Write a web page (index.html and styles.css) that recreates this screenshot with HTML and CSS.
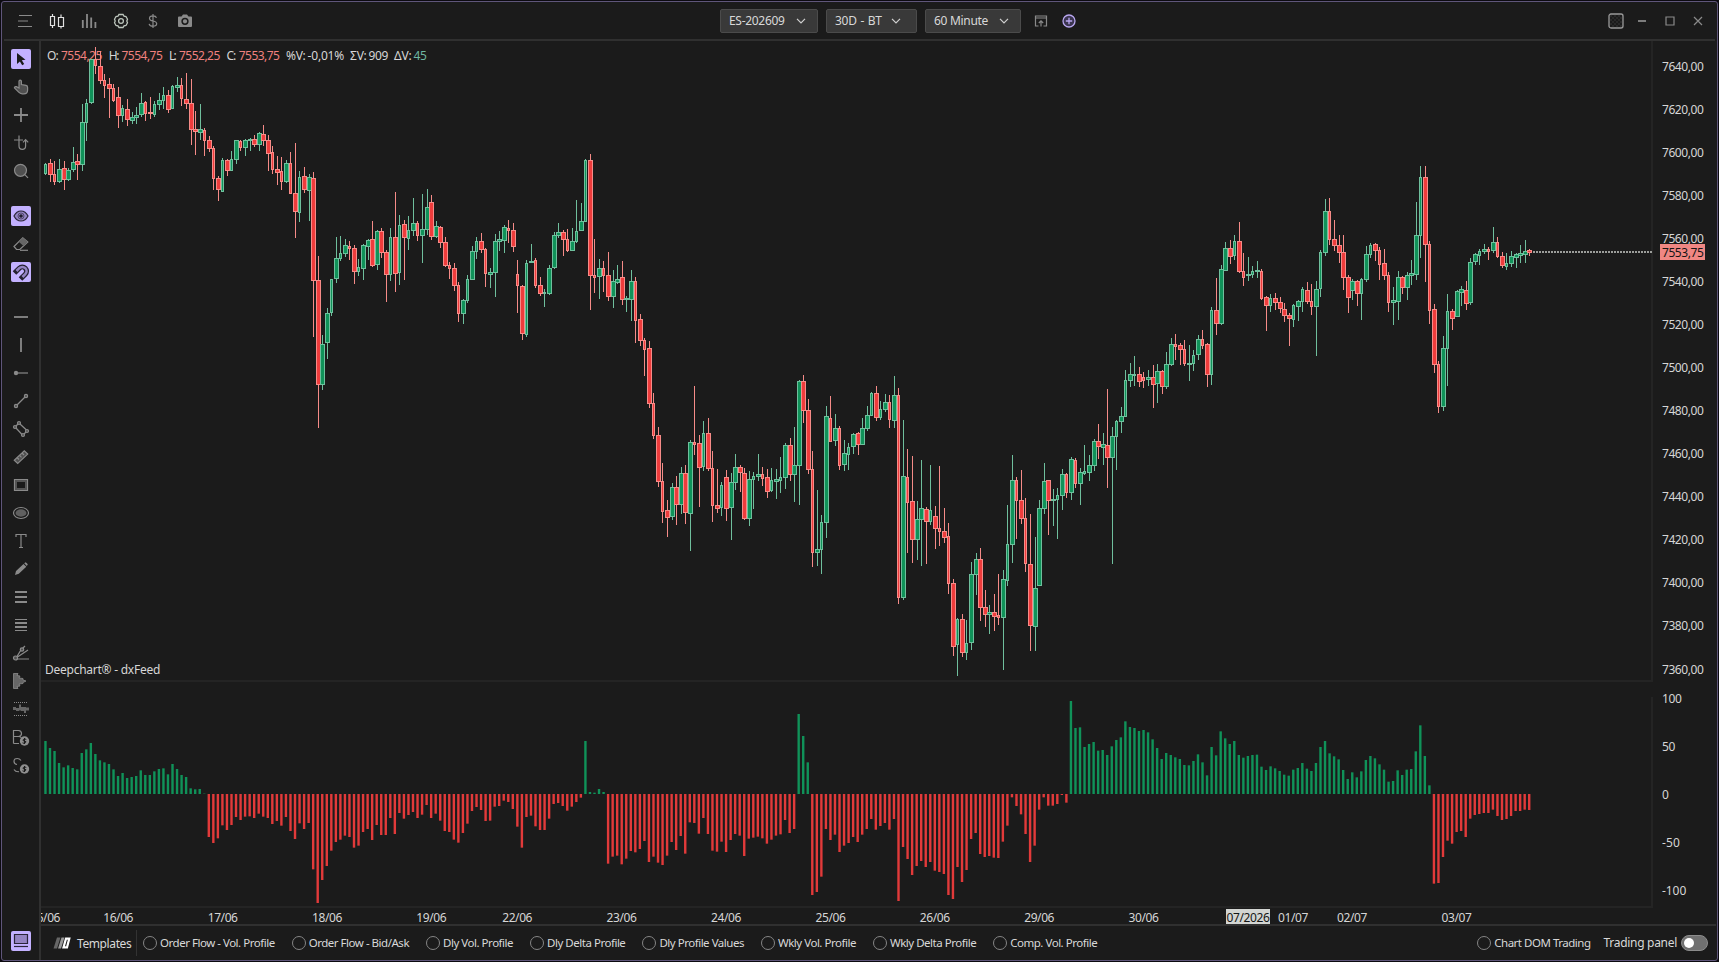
FILE: index.html
```html
<!DOCTYPE html>
<html lang="en">
  <head>
    <meta charset="utf-8">
    <title>Deepchart - ES-202609</title>
    <link rel="stylesheet" href="styles.css">
  </head>

  <body>
    <div class="window">
      <header class="topbar">
        <div class="topbar-icons">
          <svg width="16" height="16" viewBox="0 0 16 16"><path class="line" d="M2 2.5h13M1 8h10M1 13.5h14"/></svg>
          <svg width="16" height="16" viewBox="0 0 16 16"><path class="line bright" d="M1.5 3.5h4v9h-4zM3.5 1v2.5M3.5 12.5v2.5M9.5 4.5h5v9h-5zM12 1.5v3M12 13.5v2"/></svg>
          <svg width="16" height="16" viewBox="0 0 16 16"><path class="line thick" d="M1.8 15V7M6 15V1M10.2 15V4.5M14.4 15V9"/></svg>
          <svg width="16" height="16" viewBox="0 0 16 16">
            <path class="line gear" d="M6 1.500h4l1 1.700 2 .3 1.500 2.700-.7 1.800.7 1.800-1.500 2.700-2 .3-1 1.700H6l-1-1.700-2-.3-1.500-2.700.7-1.800-.7-1.800L3 3.500l2-.3z"/>
            <circle class="line gear" cx="8" cy="8" r="2.4"/>
          </svg>
          <svg width="16" height="16" viewBox="0 0 16 16"><path class="line" d="M11.5 4.8C11 3.4 9.7 2.9 8 2.9 5.8 2.9 4.5 3.9 4.5 5.4c0 3.6 7.2 1.6 7.2 5.2 0 1.6-1.5 2.6-3.7 2.6s-3.5-.9-3.9-2.4M8 1v14"/></svg>
          <svg width="16" height="16" viewBox="0 0 16 16">
            <path fill="#8a8a8a" d="M2 3.5h2.500L6 1.500h4l1.500 2H14a1 1 0 0 1 1 1V13a1 1 0 0 1-1 1H2a1 1 0 0 1-1-1V4.500a1 1 0 0 1 1-1z"/>
            <circle cx="8" cy="8.3" r="2.9" fill="#8a8a8a" stroke="#1b1b1b" stroke-width="1.5"/>
          </svg>
        </div>

        <div class="selects">
          <div class="select symbol">ES-202609 <svg width="10" height="6" viewBox="0 0 10 6"><path d="M1 .8l4 4 4-4"/></svg></div>
          <div class="select range">30D - BT <svg width="10" height="6" viewBox="0 0 10 6"><path d="M1 .8l4 4 4-4"/></svg></div>
          <div class="select period">60 Minute <svg width="10" height="6" viewBox="0 0 10 6"><path d="M1 .8l4 4 4-4"/></svg></div>
          <svg class="popout" width="14" height="14" viewBox="0 0 14 14"><path class="line" d="M4.5 12H1.500V2h11v10H9.500M1.500 4h11M7 12.500V7M4.800 9 7 6.800 9.200 9"/></svg>
          <svg class="add" width="14" height="14" viewBox="0 0 14 14"><circle cx="7" cy="7" r="6"/><path d="M7 3.800v6.400M3.800 7h6.400"/></svg>
        </div>

        <div class="window-buttons">
          <svg width="16" height="16" viewBox="0 0 16 16">
            <defs><pattern id="check" width="4" height="4" patternUnits="userSpaceOnUse"><path fill="#292929" d="M0 0h2v2H0zM2 2h2v2H2z"/></pattern></defs>
            <rect x="1" y="1" width="14" height="14" rx="2" fill="url(#check)" stroke="#999" stroke-width="1.3"/>
          </svg>
          <svg width="10" height="10" viewBox="0 0 10 10"><path class="line thick" d="M1 5h8"/></svg>
          <svg width="10" height="10" viewBox="0 0 10 10"><path class="line" d="M1 1h8v8H1z"/></svg>
          <svg width="10" height="10" viewBox="0 0 10 10"><path class="line" d="M1 1l8 8M9 1L1 9"/></svg>
        </div>
      </header>

      <aside class="tools">
        <div class="tool-group">
          <div class="tool active"><svg viewBox="0 0 20 20"><path fill="#1b1b1b" d="M6 4l8.500 6.800-3.700.5 2.400 3.800-2 1.100-2.300-3.800L6 15z"/></svg></div>
          <div class="tool"><svg viewBox="0 0 20 20"><path class="line fill" d="M8 11V4.300a1.200 1.200 0 0 1 2.400 0v3.200l4.600.9a2 2 0 0 1 1.600 2v2.800q0 3.600-4 3.600h-1.500q-2 0-3.400-1.600L3.400 10.800q.4-1.600 2-1.200z"/></svg></div>
          <div class="tool"><svg viewBox="0 0 20 20"><path class="line thick" d="M3 10h14M10 3v14"/></svg></div>
          <div class="tool"><svg viewBox="0 0 20 20"><path class="line" d="M3 7h9M8 2.500V13a3.300 3.300 0 0 0 6.600 0V7M12 9.300l2.600-2.600 2.600 2.600"/></svg></div>
          <div class="tool"><svg viewBox="0 0 20 20"><circle class="line fill" cx="9.5" cy="9.3" r="6"/><path class="line" d="M13.800 13.600l3.200 3.200"/></svg></div>
        </div>
        <div class="tool-group">
          <div class="tool active"><svg viewBox="0 0 20 20"><path fill="#9484c2" stroke="#2a2538" stroke-width="1.2" d="M3 10q2.500-5 7-5t7 5q-2.500 5-7 5t-7-5z"/><circle cx="10" cy="10" r="3" fill="none" stroke="#54496f"/><circle cx="10" cy="10" r="1.8" fill="#201c2c"/></svg></div>
          <div class="tool"><svg viewBox="0 0 20 20"><path class="line" d="M3 12.500l8.800-8.800 5 4.300-8 7.500H5.500z"/><path fill="#666" d="M8 8l4-4.200 4.700 4.200-4.200 4z"/><path class="line" d="M9 16.300h8"/></svg></div>
          <div class="tool active"><svg viewBox="0 0 20 20"><path fill="none" stroke="#242030" stroke-width="5" d="M3.500 11l4.800-4.800a4.200 4.200 0 0 1 6 6L9.500 17"/><path fill="none" stroke="#9484c2" stroke-width="2.6" d="M5.500 9l2.800-2.800a4.200 4.200 0 0 1 6 6L11.500 15"/></svg></div>
        </div>
        <div class="tool-group">
          <div class="tool"><svg viewBox="0 0 20 20"><path class="line thick" d="M3 10h14"/></svg></div>
          <div class="tool"><svg viewBox="0 0 20 20"><path class="line thick" d="M10 3v14"/></svg></div>
          <div class="tool"><svg viewBox="0 0 20 20"><circle cx="5" cy="10" r="2.2" fill="#8a8a8a"/><path class="line" d="M7 10h10"/></svg></div>
          <div class="tool"><svg viewBox="0 0 20 20"><path class="line" d="M6 14l8-8"/><circle class="line fill" cx="5" cy="15" r="1.6"/><circle class="line fill" cx="15" cy="5" r="1.6"/></svg></div>
          <div class="tool"><svg viewBox="0 0 20 20"><path class="line" d="M5 9l6 6.500M9 5l6.500 6M5 7l2-2M13 15l2-2"/><circle class="line fill" cx="4" cy="8" r="1.5"/><circle class="line fill" cx="8" cy="4" r="1.5"/><circle class="line fill" cx="16" cy="12" r="1.5"/><circle class="line fill" cx="12" cy="16" r="1.5"/></svg></div>
          <div class="tool"><svg viewBox="0 0 20 20"><path class="line fill" d="M3.300 13.200l10-9.300 3.400 3.200-10 9.300z"/><path class="line" d="M6 10.500l2 2M8.500 8.300l2 2M11 6l2 2"/></svg></div>
          <div class="tool"><svg viewBox="0 0 20 20"><path class="line" fill="#1b1b1b" d="M3.500 4.500h13v11h-13z"/><path fill="none" stroke="#555" stroke-width="2" d="M5 6h10v8H5z"/></svg></div>
          <div class="tool"><svg viewBox="0 0 20 20"><ellipse class="line" cx="10" cy="10" rx="7.5" ry="5.5"/><ellipse cx="10" cy="10" rx="5.5" ry="3.7" fill="#606060"/></svg></div>
          <div class="tool"><svg viewBox="0 0 20 20"><path class="line" d="M5 6V3.500h10V6M10 3.500v13M8 16.500h4"/></svg></div>
          <div class="tool"><svg viewBox="0 0 20 20"><path fill="#8a8a8a" d="M4 16l1-4 7.500-7 2.800 2.800-7.500 7zM13.200 4.300l1.300-1.100q1.800.6 2.300 2.400L15.800 7z"/></svg></div>
          <div class="tool"><svg viewBox="0 0 20 20"><path class="line thick" d="M4 5h12M4 10h12M4 15h12"/></svg></div>
          <div class="tool"><svg viewBox="0 0 20 20"><path class="line" d="M4 4.500h12M4 15.500h12"/><path class="line thick" d="M4 8h12M4 12h12"/></svg></div>
          <div class="tool"><svg viewBox="0 0 20 20"><path class="line" d="M5 15l5-8 4-4M5 15l12-8M5 16h13"/><circle class="line fill" cx="4.5" cy="15" r="2"/><circle class="line fill" cx="11" cy="6.5" r="1.7"/></svg></div>
          <div class="tool"><svg viewBox="0 0 20 20"><path fill="#666" stroke="#8a8a8a" stroke-width=".8" d="M2.500 2.500H7l-1 2 3 .5-1 2 4 .5v1.500l3 1-3 1.500v1l-4 .5 1 2-3 .5 1 2H2.500z"/></svg></div>
          <div class="tool"><svg viewBox="0 0 20 20"><path class="line" stroke-dasharray="1 1" d="M3 3.500h14M3 16.500h14"/><path fill="#666" d="M2 8h3v3H2zM5 9h3v3H5zM8 5.500h2v6H8zM10 8h3v4h-3zM13 8h2v6h-2zM15 8.500h3v3h-3z"/></svg></div>
          <div class="tool"><svg viewBox="0 0 20 20"><path class="line" d="M2.500 16.500v-13h5q3 .3 3 3t-3 3h-5M7.500 9.500q2 0 3 1.500M2.500 16.500H8"/><circle cx="13.500" cy="14" r="4.700" fill="#8f8f8f"/><path class="coin" d="M15.300 12.500q-1.800-1.300-3 0t1.200 1.600 1 1.600-3 .1M13.500 11v6"/></svg></div>
          <div class="tool"><svg viewBox="0 0 20 20"><path class="line" d="M10 5.500Q8.500 3.500 6.300 3.500 3 3.500 3 6.300T6 9.500M3 14.500Q4.500 17 8 16.700"/><circle cx="13.500" cy="14" r="4.700" fill="#8f8f8f"/><path class="coin" d="M15.300 12.500q-1.800-1.300-3 0t1.200 1.600 1 1.600-3 .1M13.500 11v6"/></svg></div>
        </div>
        <div class="tool active panel-toggle"><svg viewBox="0 0 20 20"><path fill="#9484c2" stroke="#2a2538" stroke-width="1.2" d="M3.500 3.500h13v9h-13z"/><path stroke="#2a2538" stroke-width="1.2" d="M3 15.500h14"/></svg></div>
      </aside>

      <main class="chart">
        <svg id="chart" width="1674" height="887" viewBox="41 41 1674 887"></svg>
      </main>

      <footer class="bottombar">
        <svg class="logo" width="18" height="12" viewBox="0 0 18 12"><path fill="#666" d="M4 .5h3.500L4 11.500H.5z"/><path fill="#999" d="M8.500.5h3l-3.500 11H5z"/><path fill="none" stroke="#fff" stroke-width="2.2" d="M13 1.600h3.300L14 10.400h-3.500z"/></svg>
        <span class="templates">Templates</span>
        <div class="options">
          <span class="option">Order Flow - Vol. Profile</span>
          <span class="option">Order Flow - Bid/Ask</span>
          <span class="option">Dly Vol. Profile</span>
          <span class="option">Dly Delta Profile</span>
          <span class="option">Dly Profile Values</span>
          <span class="option">Wkly Vol. Profile</span>
          <span class="option">Wkly Delta Profile</span>
          <span class="option">Comp. Vol. Profile</span>
        </div>
        <span class="option dom">Chart DOM Trading</span>
        <span class="trading">Trading panel</span>
        <span class="switch"></span>
      </footer>
    </div>

    <script src="chart.js"></script>
  </body>
</html>
```
FILE: styles.css
```css
* {
  box-sizing: border-box;
}
body {
  margin: 0;
  padding: 1px;
  width: 1719px;
  height: 962px;
  overflow: hidden;
  background: #0c0a10;
  color: #d8d8d8;
  font: 12px/16px "Noto Sans", "Open Sans", sans-serif;
  letter-spacing: -0.3px;
}
.window {
  display: grid;
  grid-template-columns: 39px 1fr;
  grid-template-rows: 39px 883px 1fr;
  width: 1717px;
  height: 960px;
  border: 1px solid #5f567a;
  border-radius: 3px;
  background: #1b1b1b;
}
.line {
  fill: none;
  stroke: #8a8a8a;
  stroke-width: 1.2;
}
.thick {
  stroke-width: 1.8;
}
.bright {
  stroke: #e2e2e2;
}
.gear {
  stroke: #bcc5bc;
  stroke-width: 1.3;
}
.fill {
  fill: #505050;
}
.coin {
  fill: none;
  stroke: #1b1b1b;
}

/* top bar */
.topbar {
  grid-column: 1 / 3;
  display: grid;
  grid-template-columns: 718px 1fr auto;
  align-items: center;
  margin: 0 2px;
  padding-top: 1px;
  border-bottom: 2px solid #303030;
}
.topbar-icons {
  display: flex;
  gap: 16px;
  padding-left: 13px;
}
.topbar svg {
  display: block;
}
.selects {
  display: flex;
  align-items: center;
  margin-left: -2px;
}
.select {
  display: flex;
  align-items: center;
  justify-content: space-between;
  height: 24px;
  margin-right: 8px;
  padding: 0 11px 0 8px;
  border: 1px solid #4b4b4b;
  border-radius: 2px;
  background: #393939;
}
.select path {
  fill: none;
  stroke: #d0d0d0;
  stroke-width: 1.2;
}
.symbol {
  width: 98px;
}
.range {
  width: 91px;
  padding-right: 15px;
  word-spacing: 1px;
}
.period {
  width: 96px;
}
.popout {
  margin-left: 5px;
}
.add {
  margin-left: 14px;
  fill: #3b3550;
  stroke: #b9a7f0;
  stroke-width: 1.3;
}
.window-buttons {
  display: flex;
  align-items: center;
  gap: 18px;
  padding-right: 12px;
}
.window-buttons svg:first-child {
  margin-right: -5px;
}

/* drawing tools */
.tools {
  grid-row: 2 / 4;
  display: flex;
  flex-direction: column;
  padding: 8px 0 9px 9px;
  border-right: 2px solid #303030;
}
.tool-group {
  display: flex;
  flex-direction: column;
  gap: 8px;
  margin-bottom: 25px;
}
.tool {
  width: 20px;
  height: 20px;
  border-radius: 2px;
}
.tool svg {
  display: block;
  width: 20px;
  height: 20px;
}
.active {
  background: #c3b1ff;
}
.panel-toggle {
  margin-top: auto;
}

/* chart */
.chart {
  overflow-x: clip;
}
.chart svg {
  display: block;
}
.chart text {
  fill: #d6d6d6;
}
.chart .up {
  fill: #109259;
}
.chart .up-line {
  fill: #6fbf9d;
}
.chart .down {
  fill: #ee3c3c;
}
.chart .down-line {
  fill: #f68b88;
}
.chart .down-bar {
  fill: #e23a3a;
}
.chart .grid {
  fill: #242424;
}
.chart .last {
  fill: #9c9e9b;
}
.chart .tag {
  fill: #f08783;
}
.chart .month {
  fill: #d3d5d2;
}
.chart text.dark {
  fill: #151515;
}
.chart text.loss {
  fill: #f0817f;
}
.chart text.gain {
  fill: #6fb7a0;
}

/* bottom bar */
.bottombar {
  display: flex;
  align-items: center;
  margin-right: 1px;
  border-top: 2px solid #303030;
}
.logo {
  margin-left: 12px;
}
.templates {
  margin-left: 6px;
  width: 60px;
  height: 26px;
  line-height: 27px;
  letter-spacing: -0.4px;
  border-right: 1px solid #333;
}
.options {
  display: flex;
  gap: 17px;
  margin-left: 6px;
}
.option {
  display: flex;
  align-items: center;
  font-size: 11.5px;
  letter-spacing: -0.48px;
  white-space: nowrap;
}
.option::before {
  content: "";
  width: 12px;
  height: 12px;
  margin-right: 3px;
  border: 1px solid #858585;
  border-radius: 50%;
}
.dom {
  margin-left: auto;
}
.trading {
  margin-left: 13px;
}
.switch {
  width: 27px;
  height: 16px;
  margin: 0 8px 0 4px;
  padding: 2px;
  border: 1px solid #8c8c8c;
  border-radius: 8px;
  background: #707070;
}
.switch::before {
  content: "";
  display: block;
  width: 10px;
  height: 10px;
  border-radius: 50%;
  background: #fff;
}
```
FILE: chart.js
```js
// one bar: colour, high, body top, body bottom, low (thirds of a pixel below "top")
const segments = [
  { top: 40, bars: `g368 372 402 405,r357 369 405 426,r363 402 426 435,g357 387 426 429,r363 384 420 450,g384 390 420 423,g321 366 390 396,r342 363 375 420,g192 246 375 393,g177 189 249 303,
g56 57 189 192,r21 57 78 102,r33 78 123 132,r102 120 138 174,r114 132 147 234,r132 144 183 186,r141 171 228 264,g195 204 228 246,r177 207 240 258,g216 231 243 252,
g201 225 234 252,g159 189 225 231,r183 186 222 243,r171 216 222 237,g183 192 225 231,g159 180 195 210,g141 165 183 207,r150 165 210 219,g135 138 207 207,g111 135 144 156,
r114 135 177 198,r99 177 192 207,r117 189 270 315,r213 267 276 345,g192 267 279 300,r264 270 303 348,r288 300 327 336,r318 324 417 450,r408 414 450 483,g354 360 456 456,
r358 360 393 408,g333 357 393 393,g300 300 360 372,r300 303 324 333,g297 300 324 348,g294 297 303 333,r285 297 315 321,g276 279 315 333,r255 282 303 318,r285 300 342 393,
r318 336 390 402,r348 387 399 435,r351 393 426 450,g360 369 426 429,r336 369 462 462,r309 459 516 594,g393 411 519 546,r381 408 450 459,g402 411 453 543,r396 414 723 891,
r648 720 1035 1164,g885 912 1035 1050,g804 819 909 957,g717 717 819 828,g591 654 717 729,g588 639 657 663,g597 615 642 651,r603 618 627 660,r615 624 696 732,g657 681 696 708,
g612 615 687 720,g597 600 621 660,r543 597 678 681,g570 573 675 690,r564 573 639 654,r630 636 705 786,g564 591 705 723,r456 591 702 756,g525 555 699 735,r540 552 594 720,
g528 570 597 630,g474 549 573 588,r543 549 588 603,g462 567 588 669,g447 501 570 585,r465 486 591 600,g543 558 591 594,r558 561 609 624,r591 606 678 681,r666 675 687 717,
r669 684 738 753,r726 735 822 846` },
  { top: 140, bars: `g477 480 522 552,g405 417 483 489,g318 333 420 420,g291 303 336 357,r279 303 330 339,r324 327 402 441,g384 396 405 444,g282 303 399 471,
g273 297 306 333,g255 261 303 339,r240 264 273 309,r249 270 321 336,r360 402 438 519,r435 438 582 600,g360 369 585 591,g312 363 369 369,r354 360 438 444,r411 435 462 468,
g447 456 462 501,g375 384 462 465,g276 285 384 387,g249 276 288 294,r270 276 300 348,r267 297 333 336,g264 303 333 333,g180 273 306 309,g189 243 273 273,g57 60 246 246,
r42 60 408 510,r297 405 414 459,g357 384 411 477,r363 384 408 456,r336 405 471 483,g390 423 471 504,g375 417 429 432,r363 411 480 495,g468 474 480 516,g390 423 480 543,
r411 423 543 609,r522 537 603 618,r594 600 630 708,r603 624 792 804,r759 789 888 897,r861 885 1026 1041,r969 1023 1116 1149,r1080 1110 1134 1191,g1029 1041 1131 1140,r1008 1041 1095 1155,
g981 999 1095 1122,r975 999 1119 1152,g900 906 1122 1233,r738 906 915 945,r885 909 984 1101,g843 879 981 993,r834 879 987 993,r933 984 1098 1146,r987 1095 1107 1119,g1026 1035 1104 1128,
r990 1011 1107 1143,g999 1026 1104 1200,g942 981 1029 1050,r975 981 999 1056,r984 999 1137 1140,g993 1017 1137 1158,g996 1008 1020 1107,g942 1002 1011 1023,r981 1002 1017 1038,r987 1011 1056 1074,
g984 1020 1053 1056,g987 1017 1026 1077,g951 1011 1023 1059,g909 915 1014 1047,r894 915 1005 1023,g861 975 1005 1086,g720 723 978 1095,r705 723 813 849,r777 810 990 1002,r933 987 1239 1281,
g1050 1227 1239 1278,g1125 1146 1230 1302,g798 828 1149 1194,r768 834 906 906,g822 864 903 918,r858 864 978 990,g900 939 975 993,g909 921 945 990,g879 882 921 942,r876 879 915 945` },
  { top: 370, bars: `g144 174 225 225,g108 135 177 183,g66 69 138 138,r48 69 144 153,g93 117 144 150,g72 96 120 126,r75 96 150 174,g18 75 153 174,r54 75 684 702,g150 318 684 690,
r237 321 399 549,r258 393 510 579,g393 447 510 570,g270 414 450 588,r411 417 456 582,g285 420 456 465,r408 438 477 537,r288 474 486 528,r414 483 504 519,r459 498 642 672,
r627 639 831 858,g744 747 825 918,r732 747 849 861,g750 819 849 870,g576 612 819 840,g549 567 615 675,r534 567 714 753,r660 711 735 771,g705 726 735 792,r672 726 741 783,
r612 735 744 765,g600 627 744 900,g405 522 633 648,g255 330 525 579,r321 330 393 507,r300 390 447 462,r384 444 582 606,r432 582 768 843,g501 654 771 843,g390 414 648 648,
g279 333 417 432,r330 330 393 495,g357 387 393 468,g354 375 390 507,g297 312 378 420,r309 312 369 384,g261 267 369 390,r264 270 342 354,g294 306 342 405,g225 303 312 315,
g255 285 309 333,g207 213 288 303,r162 213 231 267,g189 222 234 285,r57 225 264 354,g171 198 264 582,g150 153 201 300,g111 138 156 189` },
  { top: 150, bars: `g660 690 801 801,g639 672 693 711,g618 672 678 708,r651 672 696 711,r666 681 693 714,g660 681 690 708,r645 681 705 774,g642 663 702 759,r660 663 711 732,g606 642 711 717,
g564 582 645 648,r552 582 591 630,r579 585 600 645,r570 597 642 648,g585 639 645 693,g600 615 642 663,g555 567 615 630,r540 567 588 597,r579 582 675 711,g471 480 675 705,
r384 480 522 555,g345 357 522 525,g276 294 363 363,r270 294 321 342,g255 273 318 330,r216 273 366 369,r309 363 384 408,g321 372 378 393,g348 363 375 384,g333 360 366 384,
r357 363 447 450,r438 441 468 543,g432 444 468 486,r429 444 459 480,r441 456 477 489,r459 477 498 516,r489 495 507 588,g462 465 510 531,g450 453 471 513,g411 417 456 486,
r396 420 456 462,r402 453 471 495,g393 417 471 618,g300 306 417 441,g147 183 309 318,r144 183 270 285,r210 267 288 303,r255 285 309 339,r255 306 384 420,r375 381 444 489,
g387 393 423 450,r390 393 432 468,g384 387 432 510,g288 312 390 396,g279 285 315 324,r279 282 303 333,r291 300 345 390,r297 339 378 390,r366 375 459 486,g411 450 459 525,
g363 381 456 510,r378 381 414 432,g366 375 414 450,g330 369 378 405,g156 255 375 390,g48 81 258 324,r48 81 285 396,r273 282 483 522,r462 477 645 669,r633 642 771 789,
g558 594 771 783,g432 483 597 708,r477 483 507 540,g420 423 501 501,g408 417 429 468,r393 420 462 480,g324 336 459 465,g309 312 336 345,g297 303 318 345,g282 297 306 312,
r291 297 306 330,g231 276 303 309,r261 276 321 324,r306 318 348 354,g309 339 351 360,g303 318 342 351,g309 312 324 354,g285 309 318 339,g270 303 315 339,r297 300 309 318` }
];

// oscillator, end of each bar in thirds of a pixel, zero line at 312
const delta = [153,174,183,219,232,226,234,238,189,178,159,192,211,217,222,238,258,249,264,261,258,241,255,255,244,237,235,253,222,237,255,261,295,298,297,311,
  441,459,445,406,420,405,381,390,380,379,384,371,380,384,402,393,407,381,423,447,400,417,399,538,639,570,528,482,456,449,437,441,473,467,426,417,450,405,435,435,
  384,432,369,386,375,366,384,374,345,384,371,392,423,426,449,458,429,401,363,351,360,393,392,350,348,332,336,357,410,473,381,377,409,420,420,386,342,339,348,362,
  350,336,323,153,306,308,297,306,521,500,497,523,506,483,487,477,453,516,500,518,525,497,456,480,438,491,397,399,431,384,432,482,485,455,486,450,432,437,498,446,
  443,440,445,461,449,437,433,390,429,417,72,138,217,615,606,560,417,450,434,486,467,459,441,456,434,417,387,419,408,399,419,387,633,471,507,555,528,513,531,516,
  542,546,552,615,627,531,576,540,447,429,492,501,498,503,504,455,407,322,348,373,432,516,467,359,322,347,347,342,315,338,33,114,112,171,162,156,182,180,195,169,
  150,142,94,111,114,123,120,127,148,174,207,189,195,202,207,225,226,213,193,217,256,171,196,124,145,162,153,195,203,198,195,194,230,240,229,235,243,254,257,239,
  234,219,236,243,219,171,153,190,199,208,240,267,247,262,244,210,198,205,223,239,275,273,241,255,239,237,184,106,198,286,581,579,501,452,461,426,423,441,386,375,
  372,369,369,359,378,390,387,378,363,363,359,360];

const chart = document.getElementById('chart');
const barX = i => 45.855 + i * 4.5375;

function add(name, attrs, text) {
  const el = document.createElementNS('http://www.w3.org/2000/svg', name);
  for (const key in attrs) el.setAttribute(key, attrs[key]);
  if (text) el.textContent = text;
  chart.appendChild(el);
}

function rect(x, y, width, height, cls) {
  add('rect', { x, y, width, height, class: cls });
}

// text that fills exactly "length" pixels, centred on y
function label(x, y, text, length, cls = '') {
  add('text', { x, y: y + 4.3, textLength: length, class: cls }, text);
}

// pane borders
rect(41, 680, 1612, 2, 'grid');
rect(41, 906, 1612, 2, 'grid');
rect(1651, 41, 2, 640, 'grid');
rect(1651, 697, 2, 210, 'grid');

// quote line
[[47, 'O:', 11.5], [61, '7554,25', 41, 'loss'], [108.7, 'H:', 10.5], [121.5, '7554,75', 41, 'loss'],
 [169, 'L:', 7.5], [179, '7552,25', 41, 'loss'], [226.5, 'C:', 9.5], [238.7, '7553,75', 41, 'loss'],
 [286, '%V:', 19.5], [307.5, '-0,01%', 36.5], [350, 'ΣV:', 16.5], [368.5, '909', 19.5],
 [394, 'ΔV:', 17.5], [413.5, '45', 13, 'gain']].forEach(([x, text, len, cls]) => label(x, 56, text, len, cls));

label(45, 669.5, 'Deepchart® - dxFeed', 115);

// candles
let i = 0;
segments.forEach(({ top, bars }) => {
  bars.split(',').forEach(bar => {
    bar = bar.trim();
    const dir = bar[0] === 'g' ? 'up' : 'down';
    const [high, open, close, low] = bar.slice(1).split(' ').map(v => top + Math.round(v / 3));
    const x = Math.floor(barX(i));
    const half = barX(i) - x < 0.66 ? 2 : 1;
    rect(x, high, 1, low - high, dir + '-line');
    rect(x - half, open, half * 2 + 1, close - open, dir + '-line');
    if (close - open > 2) rect(x - half + 1, open + 1, half * 2 - 1, close - open - 2, dir);
    i++;
  });
});

// oscillator bars
delta.forEach((v, n) => {
  const end = 690 + v / 3;
  rect(barX(n) - 1.6, Math.min(794, end), 2.4, Math.abs(end - 794), v < 312 ? 'up' : 'down-bar');
});

// price axis
for (let n = 0; n < 15; n++) {
  label(1662, 66.5 + n * 43.05, (7640 - n * 20) + ',00', 41.5);
}
for (let x = 1533; x < 1652; x += 3) rect(x, 251, 2, 2, 'last');
rect(1660, 244, 45, 16, 'tag');
label(1662, 252.5, '7553,75', 41.5, 'dark');

[['100', 19.5], ['50', 13], ['0', 6.5], ['-50', 17.5], ['-100', 24]].forEach(([text, len], n) => {
  label(1662, 698.5 + n * 48, text, len);
});

// time axis
rect(1226, 909, 44, 15, 'month');
[['15/06', 45.2], ['16/06', 118.2], ['17/06', 222.7], ['18/06', 327], ['19/06', 431.3], ['22/06', 517.2], ['23/06', 621.6],
 ['24/06', 726], ['25/06', 830.5], ['26/06', 934.8], ['29/06', 1039.2], ['30/06', 1143.5], ['01/07', 1293],
 ['02/07', 1352], ['03/07', 1456.5]].forEach(([text, x]) => label(x - 15, 917.5, text, 30));
label(1226.5, 917.5, '07/2026', 43, 'dark');
```
